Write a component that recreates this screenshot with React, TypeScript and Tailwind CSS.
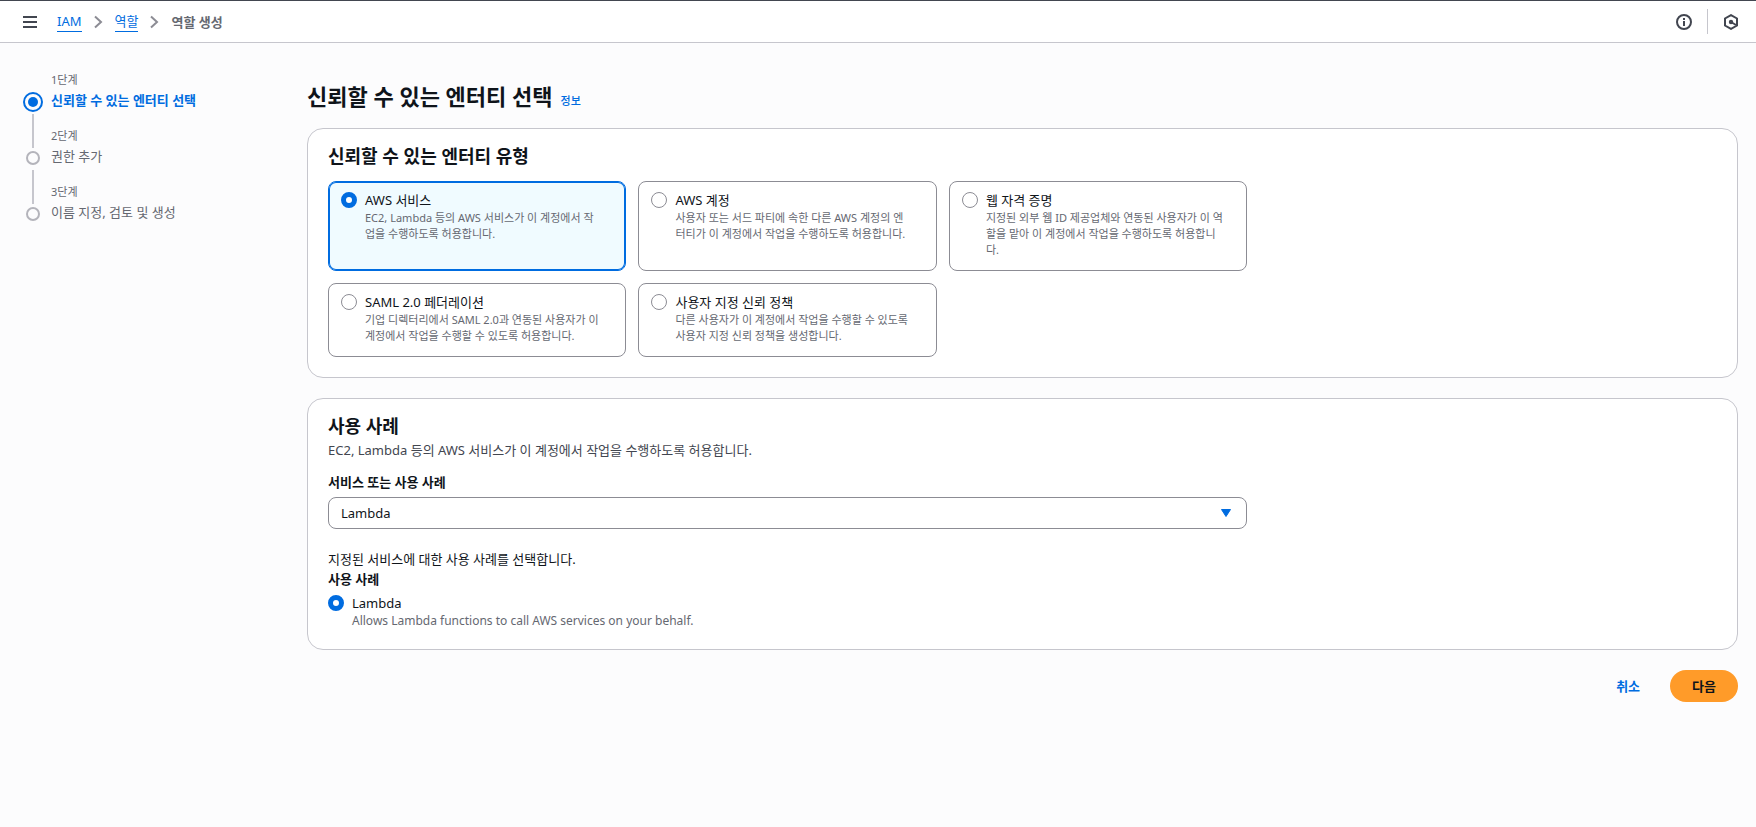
import { useState } from "react";

const steps = [
  { label: "1단계", title: "신뢰할 수 있는 엔터티 선택" },
  { label: "2단계", title: "권한 추가" },
  { label: "3단계", title: "이름 지정, 검토 및 생성" },
];

const entityTypes = [
  { id: "service", title: "AWS 서비스", text: "EC2, Lambda 등의 AWS 서비스가 이 계정에서 작업을 수행하도록 허용합니다." },
  { id: "account", title: "AWS 계정", text: "사용자 또는 서드 파티에 속한 다른 AWS 계정의 엔터티가 이 계정에서 작업을 수행하도록 허용합니다." },
  { id: "web", title: "웹 자격 증명", text: "지정된 외부 웹 ID 제공업체와 연동된 사용자가 이 역할을 맡아 이 계정에서 작업을 수행하도록 허용합니다." },
  { id: "saml", title: "SAML 2.0 페더레이션", text: "기업 디렉터리에서 SAML 2.0과 연동된 사용자가 이 계정에서 작업을 수행할 수 있도록 허용합니다." },
  { id: "custom", title: "사용자 지정 신뢰 정책", text: "다른 사용자가 이 계정에서 작업을 수행할 수 있도록 사용자 지정 신뢰 정책을 생성합니다." },
];

const radioClass =
  "mt-[2px] size-4 shrink-0 appearance-none rounded-full border border-[#8c8c94] bg-white checked:border-[5px] checked:border-[#006ce0]";

function Chevron() {
  return (
    <svg width="9" height="14" viewBox="0 0 9 14" fill="none" stroke="#8c8c94" strokeWidth="2" aria-hidden="true">
      <path d="M1 1.5 7 7l-6 5.5" />
    </svg>
  );
}

function Header() {
  return (
    <header className="flex h-[43px] items-center border-t border-b border-t-[#424650] border-b-[#c6c6cd] bg-white pr-[17px] pl-[23px]">
      <button type="button" aria-label="메뉴" className="mr-5">
        <svg width="14" height="12" viewBox="0 0 14 12" fill="#424650" aria-hidden="true">
          <path d="M0 0h14v2H0zM0 5h14v2H0zM0 10h14v2H0z" />
        </svg>
      </button>
      <nav aria-label="탐색 경로">
        <ol className="flex items-center gap-3">
          <li className="flex items-center gap-3">
            <a href="#iam" className="border-b border-[#006ce0] text-[#006ce0]">IAM</a>
            <Chevron />
          </li>
          <li className="flex items-center gap-3">
            <a href="#roles" className="border-b border-[#006ce0] text-[#006ce0]">역할</a>
            <Chevron />
          </li>
          <li className="font-bold text-[#656871]" aria-current="page">역할 생성</li>
        </ol>
      </nav>
      <div className="ml-auto flex items-center gap-[15px]">
        <button type="button" aria-label="정보">
          <svg width="16" height="16" viewBox="0 0 16 16" fill="none" stroke="#424650" strokeWidth="2" aria-hidden="true">
            <circle cx="8" cy="8" r="7" />
            <path d="M8 7v5M8 4v2" />
          </svg>
        </button>
        <span className="h-[25px] w-px bg-[#c6c6cd]" />
        <button type="button" aria-label="도구">
          <svg width="16" height="16" viewBox="0 0 16 16" fill="none" stroke="#424650" strokeWidth="2" aria-hidden="true">
            <path d="M8 1.1 14 4.5v7L8 14.9 2 11.5v-7z" />
            <circle cx="8" cy="8" r="2.2" fill="#424650" stroke="none" />
            <path d="M8 8l5 3" />
          </svg>
        </button>
      </div>
    </header>
  );
}

function Steps() {
  return (
    <ol className="w-[284px] shrink-0 pt-[29px]">
      {steps.map((step, i) => (
        <li key={step.label} className="flex h-14 gap-2">
          <div className="mt-5 -mb-5 flex w-5 flex-col items-center">
            <span className="flex h-5 items-center">
              {i === 0 ? (
                <span className="flex size-5 items-center justify-center rounded-full border-2 border-[#006ce0]">
                  <span className="size-[10px] rounded-full bg-[#006ce0]" />
                </span>
              ) : (
                <span className="size-[14px] rounded-full border-2 border-[#b4b4bb]" />
              )}
            </span>
            {i < steps.length - 1 && <span className="mt-[2px] w-[2px] flex-1 bg-[#c6c6cd]" />}
          </div>
          <div>
            <p className="text-[11px] leading-4 text-[#656871]">{step.label}</p>
            <p className={i === 0 ? "mt-[2px] font-bold text-[#006ce0]" : "mt-[2px] text-[#656871]"}>{step.title}</p>
          </div>
        </li>
      ))}
    </ol>
  );
}

export default function App() {
  const [entity, setEntity] = useState("service");

  return (
    <div className="min-h-screen bg-[#fcfcfd] font-['Noto_Sans','Noto_Sans_CJK_KR',sans-serif] text-[13px] leading-5 text-[#0f141a]">
      <Header />
      <div className="flex pr-[18px] pl-[23px]">
        <Steps />
        <main className="min-w-0 flex-1 pt-[38px] pb-8">
          <div className="mb-[17px] flex items-baseline gap-2">
            <h1 className="text-[22px] leading-[30px] font-bold">신뢰할 수 있는 엔터티 선택</h1>
            <a href="#info" className="text-[11px] leading-4 font-medium text-[#006ce0]">정보</a>
          </div>

          <section className="rounded-2xl border border-[#c6c6cd] bg-white px-5 pt-[15px] pb-5">
            <h2 className="mb-[13px] text-lg leading-6 font-bold">신뢰할 수 있는 엔터티 유형</h2>
            <div className="grid grid-cols-3 gap-5">
              <div role="radiogroup" aria-label="신뢰할 수 있는 엔터티 유형" className="col-span-2 grid grid-cols-3 gap-3">
                {entityTypes.map((type) => (
                  <label
                    key={type.id}
                    className="flex gap-2 rounded-lg border border-[#8c8c94] pt-2 pr-[23px] pb-3 pl-3 has-checked:border-[#006ce0] has-checked:bg-[#f0fbff] has-checked:inset-ring has-checked:inset-ring-[#006ce0]"
                  >
                    <input
                      type="radio"
                      name="entity"
                      className={radioClass}
                      checked={entity === type.id}
                      onChange={() => setEntity(type.id)}
                    />
                    <span className="min-w-0">
                      <span className="block">{type.title}</span>
                      <span className="block text-[11px] leading-4 text-[#656871]">{type.text}</span>
                    </span>
                  </label>
                ))}
              </div>
            </div>
          </section>

          <section className="mt-5 rounded-2xl border border-[#c6c6cd] bg-white px-5 pt-[15px] pb-5">
            <h2 className="text-lg leading-6 font-bold">사용 사례</h2>
            <p className="mt-[2px] text-[#424650]">EC2, Lambda 등의 AWS 서비스가 이 계정에서 작업을 수행하도록 허용합니다.</p>
            <div className="mt-3 grid grid-cols-3 gap-5">
              <div className="col-span-2">
                <label htmlFor="service" className="mb-[5px] block font-bold">서비스 또는 사용 사례</label>
                <div className="relative">
                  <select id="service" className="block h-8 w-full appearance-none rounded-lg border border-[#8c8c94] bg-white px-3">
                    <option>Lambda</option>
                  </select>
                  <svg className="pointer-events-none absolute top-3 right-4" width="10" height="8" viewBox="0 0 10 8" fill="#006ce0" stroke="#006ce0" strokeLinejoin="round" aria-hidden="true">
                    <path d="M.5.5h9L5 7.5z" />
                  </svg>
                </div>
              </div>
            </div>
            <p className="mt-5">지정된 서비스에 대한 사용 사례를 선택합니다.</p>
            <fieldset>
              <legend className="mb-1 font-bold">사용 사례</legend>
              <label className="flex gap-2">
                <input type="radio" name="usecase" className={radioClass} defaultChecked />
                <span>
                  <span className="block">Lambda</span>
                  <span className="block text-xs leading-4 text-[#656871]">
                    Allows Lambda functions to call AWS services on your behalf.
                  </span>
                </span>
              </label>
            </fieldset>
          </section>

          <div className="mt-5 flex justify-end gap-2">
            <button type="button" className="h-8 rounded-full px-[22px] font-bold text-[#006ce0]">취소</button>
            <button type="button" className="h-8 rounded-full bg-[#ff9b29] px-[22px] font-bold">다음</button>
          </div>
        </main>
      </div>
    </div>
  );
}
